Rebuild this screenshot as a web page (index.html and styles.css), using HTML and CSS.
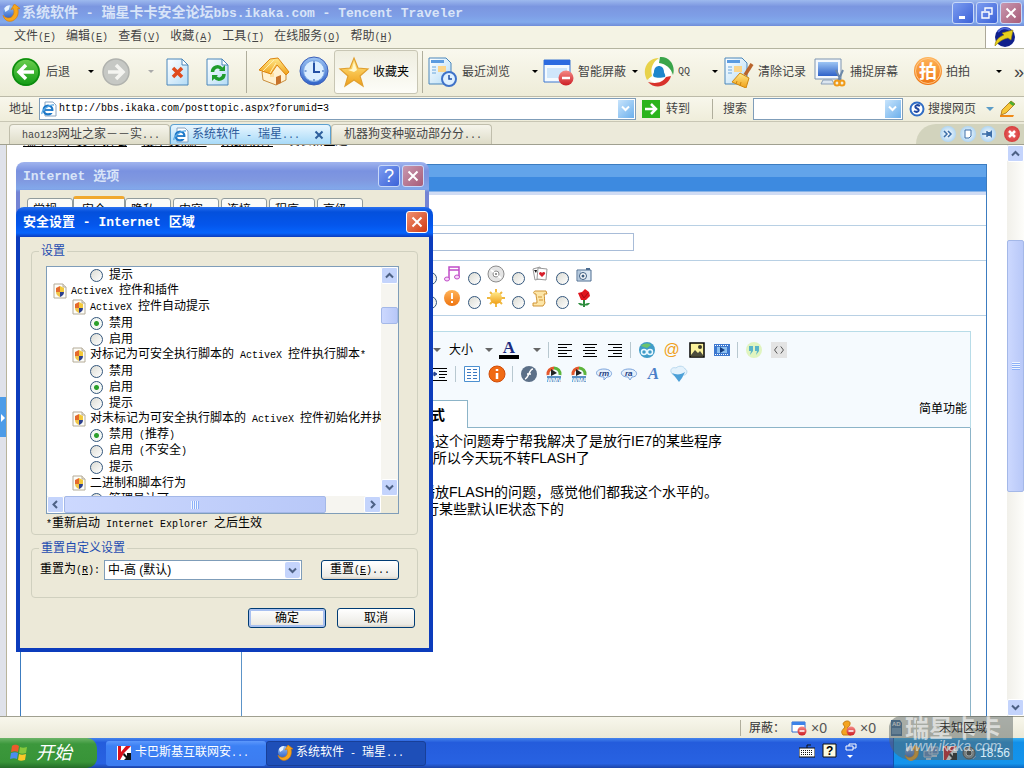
FILE: index.html
```html
<!DOCTYPE html>
<html lang="zh-CN">
<head>
  <meta charset="utf-8">
  <title>系统软件 - 瑞星卡卡安全论坛bbs.ikaka.com - Tencent Traveler</title>
  <link rel="stylesheet" href="styles.css">
</head>
<body>
  <!-- shared icons -->
  <svg class="defs" width="0" height="0">
    <defs>
      <linearGradient id="blueBall" x1="0" y1="0" x2="0" y2="1"><stop offset="0" stop-color="#9cc4f4"/><stop offset="1" stop-color="#2f62c8"/></linearGradient>
      <linearGradient id="greenBall" x1="0" y1="0" x2="0" y2="1"><stop offset="0" stop-color="#6fd050"/><stop offset="1" stop-color="#0f9a14"/></linearGradient>
      <linearGradient id="gold" x1="0" y1="0" x2="0" y2="1"><stop offset="0" stop-color="#ffe98a"/><stop offset="1" stop-color="#f0a018"/></linearGradient>
      <linearGradient id="paper" x1="0" y1="0" x2="1" y2="1"><stop offset="0" stop-color="#ffffff"/><stop offset="1" stop-color="#b4dcf6"/></linearGradient>
      <linearGradient id="redBall" x1="0" y1="0" x2="0" y2="1"><stop offset="0" stop-color="#f58a86"/><stop offset="1" stop-color="#cc1d24"/></linearGradient>
      <linearGradient id="orangeBall" x1="0" y1="0" x2="0" y2="1"><stop offset="0" stop-color="#ffb45a"/><stop offset="1" stop-color="#ee7410"/></linearGradient>
    </defs>
    <symbol id="tt" viewBox="0 0 16 16">
      <circle cx="7" cy="7" r="6" fill="url(#blueBall)"/>
      <path d="M2 4c1-2 3-3 5-3l-1 4-3 2z" fill="#e8f3ff"/>
      <path d="M1 10c2 3 6 3 8 1 2-2 2-5 1-7l-2 1 3-5 5 4-2 0c1 4 0 8-3 10-4 3-9 1-10-4z" fill="#f7a71c" stroke="#d97c08" stroke-width=".6"/>
    </symbol>
    <symbol id="ie" viewBox="0 0 16 16">
      <path d="M4 1h8l3 3v11H4z" fill="#fff" stroke="#8aa4c0"/>
      <circle cx="7" cy="9" r="4.4" fill="none" stroke="#1d78c8" stroke-width="2.2"/>
      <path d="M4 9h7" stroke="#1d78c8" stroke-width="1.8"/>
      <path d="M8 10h5v2H8z" fill="#fff"/>
      <path d="M1 13C0 10 8 3 13 4" fill="none" stroke="#59a8e4" stroke-width="1.3"/>
    </symbol>
    <symbol id="shield" viewBox="0 0 14 16">
      <path d="M1 1h9l3 3v11H1z" fill="#fdfdf8" stroke="#b4ab98"/>
      <path d="M10 1v3h3" fill="#e8e4d8" stroke="#b4ab98"/>
      <path d="M3 5l4-2v6H3z" fill="#e46a2c"/>
      <path d="M7 3l4 2v4H7z" fill="#f3c93a"/>
      <path d="M3 9h4v5c-2-1-4-2-4-5z" fill="#f0c64a"/>
      <path d="M7 9h4c0 3-2 4-4 5z" fill="#2c3f8c"/>
    </symbol>
    <symbol id="kav" viewBox="0 0 16 16">
      <path d="M1 1h14v14H1z" fill="#fff"/>
      <path d="M2 1h3v6l5-6h5L8 8l-4 7H2z" fill="#d8101c"/>
      <path d="M8 8l3 3V8h4v7H8l2-2-3-3z" fill="#111"/>
    </symbol>
    <symbol id="up" viewBox="0 0 9 9"><path d="M1 6.500l3.500-3.500L8 6.500" fill="none" stroke="#4d6185" stroke-width="2"/></symbol>
    <symbol id="down" viewBox="0 0 9 9"><path d="M1 2.500L4.500 6 8 2.500" fill="none" stroke="#4d6185" stroke-width="2"/></symbol>
    <symbol id="left" viewBox="0 0 9 9"><path d="M6 1L2.500 4.500 6 8" fill="none" stroke="#4d6185" stroke-width="2"/></symbol>
    <symbol id="right" viewBox="0 0 9 9"><path d="M3 1l3.500 3.500L3 8" fill="none" stroke="#4d6185" stroke-width="2"/></symbol>
    <symbol id="cross" viewBox="0 0 12 12"><path d="M1.500 1.500l9 9M10.500 1.500l-9 9" stroke="#fff" stroke-width="2"/></symbol>
    <symbol id="block" viewBox="0 0 16 16">
      <path d="M1 2h13v10H1z" fill="#fff" stroke="#2e6ad0"/>
      <path d="M1 2h13v3H1z" fill="#3c82e8"/>
      <circle cx="11" cy="11" r="4.500" fill="url(#redBall)"/>
      <path d="M8.500 11h5" stroke="#fff" stroke-width="1.500"/>
    </symbol>
  </svg>

  <header class="titlebar">
    <svg class="i18"><use href="#tt"/></svg>
    <h1>系统软件<span class="en"> - </span>瑞星卡卡安全论坛<span class="en">bbs.ikaka.com - Tencent Traveler</span></h1>
    <button class="winbtn" aria-label="最小化"><svg viewBox="0 0 12 12"><path d="M2 9h6v3H2z" fill="#fff"/></svg></button>
    <button class="winbtn" aria-label="还原"><svg viewBox="0 0 12 12"><path d="M4 4V1h7v6H8M1 5h7v6H1z" fill="none" stroke="#fff" stroke-width="1.400"/></svg></button>
    <button class="winbtn faded" aria-label="关闭"><svg><use href="#cross"/></svg></button>
  </header>

  <nav class="menubar">
    <a href="#">文件<span class="en">(<u>F</u>)</span></a>
    <a href="#">编辑<span class="en">(<u>E</u>)</span></a>
    <a href="#">查看<span class="en">(<u>V</u>)</span></a>
    <a href="#">收藏<span class="en">(<u>A</u>)</span></a>
    <a href="#">工具<span class="en">(<u>T</u>)</span></a>
    <a href="#">在线服务<span class="en">(<u>O</u>)</span></a>
    <a href="#">帮助<span class="en">(<u>H</u>)</span></a>
    <span class="brand">
      <svg class="i22" viewBox="0 0 22 22"><circle cx="11" cy="11" r="10" fill="#10208c"/><path d="M4 6c3-4 8-5 12-2" stroke="#4a62d8" stroke-width="2" fill="none"/><path d="M1 20c0-6 4-9 9-11l-2-2 11-3-2 10-3-2c-5 1-8 3-13 8z" fill="#e6cf1c" stroke="#8f7c08" stroke-width=".6"/></svg>
    </span>
  </nav>

  <div class="toolbar">
    <button class="tool">
      <svg viewBox="0 0 32 32"><circle cx="16" cy="16" r="14" fill="url(#greenBall)"/><circle cx="16" cy="16" r="13" fill="none" stroke="#0c8a10" stroke-width="1.500"/><path d="M24 16H10M16 9l-7 7 7 7" fill="none" stroke="#fff" stroke-width="3.500"/></svg>
      后退<i class="arrow end"></i>
    </button>
    <button class="tool">
      <svg viewBox="0 0 32 32"><circle cx="18" cy="16" r="13" fill="#c6c8c4" stroke="#b0b2ae" stroke-width="1.500"/><path d="M10 16h14M18 9l7 7-7 7" fill="none" stroke="#f4f4f0" stroke-width="3.500"/></svg>
      <i class="arrow off end"></i>
    </button>
    <button class="tool" aria-label="停止">
      <svg viewBox="0 0 32 32"><path d="M5 3h15l6 6v20H5z" fill="url(#paper)" stroke="#4a86ba"/><path d="M20 3v6h6z" fill="#fff" stroke="#4a86ba"/><path d="M11 12l9 9M20 12l-9 9" stroke="#e04a1c" stroke-width="3.500"/></svg>
    </button>
    <button class="tool" aria-label="刷新">
      <svg viewBox="0 0 32 32"><path d="M5 3h15l6 6v20H5z" fill="url(#paper)" stroke="#4a86ba"/><path d="M20 3v6h6z" fill="#fff" stroke="#4a86ba"/><path d="M10.500 16c0-5 6-7 9-3" fill="none" stroke="#1f9c2c" stroke-width="3.500"/><path d="M17 15h6V9z" fill="#1f9c2c"/><path d="M22 18c0 5-6 7-9 3" fill="none" stroke="#1f9c2c" stroke-width="3.500"/><path d="M16 19h-6v6z" fill="#1f9c2c"/></svg>
    </button>
    <i class="sep"></i>
    <button class="tool" aria-label="主页">
      <svg viewBox="0 0 32 32"><path d="M4 16l8-4 6-6 10 9v9l-10 5-13-5z" fill="#fff1d0" stroke="#c98d3c"/><path d="M18 29v-8l5-2v8z" fill="#c8732c"/><path d="M12 17h4v4h-4z" fill="#ffe0a0"/><path d="M1 14L12 3l8-1 11 14-3 3-9-10-6 9z" fill="url(#gold)" stroke="#dc8410"/><path d="M18 7l-6 10M16 4L5 15" stroke="#ffeeb0" fill="none"/></svg>
    </button>
    <button class="tool" aria-label="历史">
      <svg viewBox="0 0 32 32"><circle cx="16" cy="15" r="14" fill="url(#blueBall)" stroke="#3c5fb8"/><circle cx="16" cy="15" r="10.500" fill="#dbeeff" stroke="#7ca8e4"/><path d="M16 7v9h6" fill="none" stroke="#2450a4" stroke-width="2"/><path d="M16 5v2M16 23v2M6.500 15h2M24 15h2" stroke="#5c88cc" stroke-width="1.500"/></svg>
    </button>
    <button class="tool pressed">
      <svg viewBox="0 0 32 32"><path d="M16 2l4 10 10 1-8 7 3 10-9-6-9 6 3-10-8-7 10-1z" fill="url(#gold)" stroke="#e0a030" stroke-width="1.200"/><path d="M16 6l3 8-3 2-6-2 4-1z" fill="#fff8cc"/></svg>
      收藏夹
    </button>
    <i class="sep"></i>
    <button class="tool">
      <svg viewBox="0 0 32 32"><path d="M3 2h17l5 5v21H3z" fill="url(#paper)" stroke="#4a86ba"/><path d="M5 4h13v3H5z" fill="#5b9be0"/><path d="M12 10h8v6h-8z" fill="#fbd58a"/><path d="M6 11h4M6 14h4M6 17h4" stroke="#6ba6dc"/><circle cx="23" cy="23" r="7" fill="#dff0ff" stroke="#3f72c8" stroke-width="2"/><path d="M23 19v4h3" fill="none" stroke="#2450a4" stroke-width="1.500"/></svg>
      最近浏览<i class="arrow end"></i>
    </button>
    <button class="tool">
      <svg viewBox="0 0 32 32"><path d="M2 4h26v22H2z" fill="#f4faff" stroke="#3c76d0"/><path d="M2 4h26v5H2z" fill="#2d6be0"/><path d="M5 12h20v10H5z" fill="#cfe6fb"/><circle cx="24" cy="22" r="7.500" fill="url(#redBall)"/><path d="M20 22h8" stroke="#fff" stroke-width="2.500"/></svg>
      智能屏蔽<i class="arrow end"></i>
    </button>
    <button class="tool">
      <svg viewBox="0 0 32 32"><circle cx="17" cy="16" r="12" fill="#fff"/><path d="M5 24C-1 13 6 2 17 2c-6 4-9 10-7 18z" fill="#e8d24a"/><path d="M18 1c9-1 16 8 13 18-2-7-7-11-14-12z" fill="#3aa54a"/><path d="M29 20c-3 11-16 14-23 6 8 2 14 1 18-5z" fill="#d8322c"/><path d="M12 21c-2-2 0-4 0-5 0-8 10-8 10 0 0 1 2 3 1 5-3 1-9 1-11 0z" fill="#1e86cc"/></svg>
      <span class="en">QQ</span><i class="arrow end"></i>
    </button>
    <button class="tool">
      <svg viewBox="0 0 32 32"><path d="M3 2h17l5 5v21H3z" fill="url(#paper)" stroke="#4a86ba"/><path d="M5 4h13v3H5z" fill="#5b9be0"/><path d="M12 10h8v6h-8z" fill="#fbd58a"/><path d="M6 11h4M6 14h4M6 17h4" stroke="#6ba6dc"/><path d="M30 8l-7 11" stroke="#b8642c" stroke-width="3.500"/><path d="M18 17l9 5-3 10-14-6z" fill="url(#gold)" stroke="#d08810"/><path d="M15 25l-1 3M19 26l-1 4" stroke="#d08810"/></svg>
      清除记录
    </button>
    <button class="tool">
      <svg viewBox="0 0 32 32"><path d="M1 3h26v20H1z" fill="#f4f8fc" stroke="#7c94b0"/><path d="M4 6h20v14H4z" fill="url(#blueBall)"/><path d="M7 28h13l-2-4h-9z" fill="#dce6f0" stroke="#8ca0b8"/><path d="M22 14l5 11M29 14l-5 11" stroke="#6c88a8" stroke-width="2"/><circle cx="23" cy="27" r="2.500" fill="none" stroke="#f09a18" stroke-width="2"/><circle cx="28" cy="27" r="2.500" fill="none" stroke="#f09a18" stroke-width="2"/></svg>
      捕捉屏幕
    </button>
    <button class="tool">
      <svg viewBox="0 0 32 32"><circle cx="18" cy="15" r="14" fill="url(#orangeBall)"/><circle cx="18" cy="15" r="12.500" fill="none" stroke="#ffc888"/><text x="9" y="22" class="pai">拍</text></svg>
      拍拍<i class="arrow end"></i>
    </button>
    <button class="more" aria-label="更多">»</button>
  </div>

  <form class="addressbar">
    <label for="url">地址</label>
    <div class="field grow">
      <svg class="i16"><use href="#ie"/></svg>
      <input id="url" type="text" value="http://bbs.ikaka.com/posttopic.aspx?forumid=3">
      <button type="button" class="drop" aria-label="地址列表"><svg viewBox="0 0 9 9"><path d="M1 2.500L4.500 6 8 2.500" fill="none" stroke="#fff" stroke-width="2"/></svg></button>
    </div>
    <button type="button" class="go">
      <svg class="i18" viewBox="0 0 18 18"><path d="M0 0h18v18H0z" fill="#2cb41c"/><path d="M3 9h10M9 4l5 5-5 5" fill="none" stroke="#fff" stroke-width="2.500"/></svg>
      转到
    </button>
    <i class="sep"></i>
    <label for="search">搜索</label>
    <div class="field search">
      <input id="search" type="text">
      <button type="button" class="drop" aria-label="搜索列表"><svg viewBox="0 0 9 9"><path d="M1 2.500L4.500 6 8 2.500" fill="none" stroke="#fff" stroke-width="2"/></svg></button>
    </div>
    <button type="button" class="soso">
      <svg class="i16" viewBox="0 0 16 16"><circle cx="8" cy="8" r="6.500" fill="#fff" stroke="#2f6cc4" stroke-width="2"/><path d="M11 5C8 3 5 5 7 7l2 1c2 2-1 4-4 2" fill="none" stroke="#2048a0" stroke-width="2"/></svg>
      搜搜网页<i class="arrow blue"></i>
    </button>
    <svg class="i18" viewBox="0 0 18 18"><path d="M0 15h14l-1 2H0z" fill="#f08a18"/><path d="M1 15l1-5 9-9 4 3-9 9z" fill="#f7c83a" stroke="#b8842c"/><path d="M9 3l4 3 2-2-4-3z" fill="#4cae34"/></svg>
  </form>

  <div class="tabbar">
    <a class="tab" href="#"><span><span class="en">hao123</span>网址之家－－实<span class="en">...</span></span></a>
    <a class="tab active" href="#"><svg class="i16"><use href="#ie"/></svg><span>系统软件<span class="en"> - </span>瑞星<span class="en">...</span></span>
      <svg class="close" viewBox="0 0 10 10"><path d="M1.500 1.500l7 7M8.500 1.500l-7 7" stroke="#2e5f9c" stroke-width="2"/></svg></a>
    <a class="tab" href="#"><span>机器狗变种驱动部分分<span class="en">...</span></span></a>
    <div class="tabtools">
      <button aria-label="标签列表"><svg viewBox="0 0 16 16"><path d="M4 5l3 3-3 3M8 5l3 3-3 3" fill="none" stroke="#3c6ea8" stroke-width="1.500"/></svg></button>
      <button aria-label="新建标签"><svg viewBox="0 0 16 16"><path d="M5 4h6v6l-2 2H5z" fill="#fff" stroke="#3c6ea8"/></svg></button>
      <button aria-label="锁定标签"><svg viewBox="0 0 16 16"><path d="M2 8h5M7 5v6" fill="none" stroke="#3c6ea8" stroke-width="1.500"/><path d="M7 6h3l2-2v8l-2-2H7z" fill="#3c6ea8"/></svg></button>
      <button class="red" aria-label="关闭标签"><svg viewBox="0 0 16 16"><path d="M5 5l6 6M11 5l-6 6" stroke="#fff" stroke-width="2.500"/></svg></button>
    </div>
  </div>

  <main class="viewport">
    <button class="sidehandle" aria-label="展开侧栏"><svg viewBox="0 0 6 10"><path d="M1 1l4 4-4 4z" fill="#fff"/></svg></button>
    <div class="page">
      <div class="crumbs"><a href="#">瑞星卡卡安全论坛</a> » <a href="#">技术交流区</a> » <a href="#">系统软件</a> » <span>发表新主题</span></div>
      <div class="panel">
        <div class="panelhead"></div>
        <div class="formrow short"><div class="cap"></div><div class="cell"></div></div>
        <div class="formrow"><div class="cap"></div><div class="cell"><input class="subject" type="text" aria-label="标题"></div></div>
        <div class="formrow icons">
          <div class="cap"></div>
          <div class="cell moods">
            <label><input type="radio" name="mood"><svg viewBox="0 0 18 18"><path d="M6 14V2h10v10M6 5h10" fill="none" stroke="#c04cc8" stroke-width="1.500"/><ellipse cx="4" cy="14" rx="2.500" ry="2" fill="#f6d8f8" stroke="#c04cc8"/><ellipse cx="14" cy="12" rx="2.500" ry="2" fill="#f6d8f8" stroke="#c04cc8"/></svg></label>
            <label><input type="radio" name="mood"><svg viewBox="0 0 18 18"><circle cx="9" cy="9" r="8" fill="#e4e4e4" stroke="#8c8c8c"/><circle cx="9" cy="9" r="3" fill="#fff" stroke="#8c8c8c"/><circle cx="9" cy="9" r="1" fill="#777"/><path d="M4 5l3 2M11 11l3 2" stroke="#fff" stroke-width="2"/></svg></label>
            <label><input type="radio" name="mood"><svg viewBox="0 0 18 18"><path d="M2 4l7-2 3 11-8 2z" fill="#fff" stroke="#999"/><path d="M7 3l9 1-1 11-9-1z" fill="#fff" stroke="#999"/><path d="M3 5h3l-1 3z" fill="#111"/><path d="M11 12L8 9c0-2 2-3 3-1 1-2 4-1 3 1z" fill="#d8202c"/></svg></label>
            <label><input type="radio" name="mood"><svg viewBox="0 0 18 18"><path d="M2 5h14v11H2z" fill="#dce8f4" stroke="#4c6c90"/><path d="M11 3h4v2h-4z" fill="#4c6c90"/><path d="M3 6h3v9H3z" fill="#b4c8dc"/><circle cx="8" cy="11" r="3.500" fill="#fff" stroke="#3c5c80"/><circle cx="8" cy="11" r="1.500" fill="#3c5c80"/></svg></label>
            <label><input type="radio" name="mood"><svg viewBox="0 0 18 18"><circle cx="9" cy="9" r="8" fill="url(#orangeBall)"/><path d="M9 4v6M9 12v2" stroke="#fff" stroke-width="2"/></svg></label>
            <label><input type="radio" name="mood"><svg viewBox="0 0 18 18"><path d="M9 0v18M0 9h18M3 3l12 12M15 3L3 15" stroke="#f0b840" stroke-width="2"/><circle cx="9" cy="9" r="6" fill="url(#gold)"/></svg></label>
            <label><input type="radio" name="mood"><svg viewBox="0 0 18 18"><path d="M4 2h11l1 3h-3c1 4 0 6 1 9l-2 3H2v-3h4c0-4-1-6-1-9-3 0-3-2-1-3z" fill="#fde6a8" stroke="#d09434"/><path d="M7 8h4M8 11h4" stroke="#d09434"/></svg></label>
            <label><input type="radio" name="mood"><svg viewBox="0 0 18 18"><path d="M9 9v9" stroke="#2c8c3c" stroke-width="2"/><path d="M9 16c-2-2-4-2-6-2 2 3 4 3 6 2 2-2 4-2 6-2-2 3-4 3-6 2" fill="#2c8c3c"/><path d="M3 4l4-1 3-3 4 3 1 4-4 4H6z" fill="#e0141c"/><path d="M6 4l3 5 4-5" fill="none" stroke="#a80810"/></svg></label>
          </div>
        </div>
        <div class="formrow editorrow">
          <div class="cap"></div>
          <div class="cell">
            <div class="editor">
              <div class="edtools">
                <div class="edline">
                  <button class="mini" aria-label="字体"><i class="arrow grey"></i></button>
                  <button class="size">大小<i class="arrow grey"></i></button>
                  <button class="color" aria-label="颜色"><span>A</span><i class="arrow grey"></i></button>
                  <i class="sep"></i>
                  <button aria-label="左对齐"><svg viewBox="0 0 18 18"><path d="M2 3.500h14M2 6.500h9M2 9.500h14M2 12.500h9M2 15.500h14" stroke="#000"/></svg></button>
                  <button aria-label="居中"><svg viewBox="0 0 18 18"><path d="M2 3.500h14M4 6.500h10M2 9.500h14M4 12.500h10M2 15.500h14" stroke="#000"/></svg></button>
                  <button aria-label="右对齐"><svg viewBox="0 0 18 18"><path d="M2 3.500h14M7 6.500h9M2 9.500h14M7 12.500h9M2 15.500h14" stroke="#000"/></svg></button>
                  <i class="sep"></i>
                  <button aria-label="链接"><svg viewBox="0 0 18 18"><circle cx="9" cy="9" r="8" fill="#3f9cc8"/><path d="M3 5c3-3 7-3 10-1l-4 3z" fill="#6cc46c"/><circle cx="6" cy="11" r="2.500" fill="none" stroke="#e8f8ff" stroke-width="1.500"/><circle cx="12" cy="11" r="2.500" fill="none" stroke="#e8f8ff" stroke-width="1.500"/></svg></button>
                  <button class="at" aria-label="邮件">@</button>
                  <button aria-label="图片"><svg viewBox="0 0 18 18"><path d="M2 2h14v14H2z" fill="#fbf29c" stroke="#000" stroke-width="1.500"/><path d="M3 14l4-5 3 3 2-2 3 4v1H3z" fill="#4c4c3c"/><circle cx="12" cy="6" r="2" fill="#3c3c2c"/></svg></button>
                  <button aria-label="视频"><svg viewBox="0 0 18 18"><path d="M1 3h16v12H1z" fill="#3c78d0"/><path d="M2 4.500h14M2 13.500h14" stroke="#fff" stroke-dasharray="1 1"/><path d="M4 6h10v6H4z" fill="#8cc0f0"/><path d="M7 6l5 3-5 3z" fill="#123c80"/></svg></button>
                  <i class="sep"></i>
                  <button aria-label="引用"><svg viewBox="0 0 18 18"><circle cx="9" cy="9" r="8" fill="#e0f4c0"/><path d="M4 5h4v5l-3 4 1-4H4zM10 5h4v5l-3 4 1-4h-2z" fill="#5ab4c8"/></svg></button>
                  <button class="code" aria-label="代码"><svg viewBox="0 0 18 18"><path d="M7 5L4 9l3 4M11 5l3 4-3 4" fill="none" stroke="#444"/></svg></button>
                </div>
                <div class="edline">
                  <button aria-label="缩进"><svg viewBox="0 0 18 18"><path d="M2 3.500h14M8 6.500h8M8 9.500h8M8 12.500h6M2 15.500h14" stroke="#000"/><path d="M1 9h3M3 7l3 2-3 2z" fill="#23408c" stroke="#23408c"/></svg></button>
                  <i class="sep"></i>
                  <button aria-label="表格"><svg viewBox="0 0 18 18"><path d="M1.500 1.500h15v15h-15z" fill="#fff" stroke="#4c90d0"/><path d="M4 4.500h4M10 4.500h4M4 7.500h4M10 7.500h4M4 10.500h4M10 10.500h4M4 13.500h4M10 13.500h4" stroke="#3c78c0"/></svg></button>
                  <button aria-label="信息"><svg viewBox="0 0 18 18"><circle cx="9" cy="9" r="8" fill="#f06a14" stroke="#d04c08"/><path d="M9 4v2M9 8v6" stroke="#fff" stroke-width="2.500"/></svg></button>
                  <i class="sep"></i>
                  <button aria-label="Flash"><svg viewBox="0 0 18 18"><circle cx="9" cy="9" r="8" fill="#5c7088"/><path d="M13 4C9 4 9 13 5 14M7 9h4" fill="none" stroke="#fff" stroke-width="1.500"/></svg></button>
                  <button aria-label="WMV"><svg viewBox="0 0 18 18"><path d="M3 10a6 6 0 0 1 6-7" fill="none" stroke="#e4582c" stroke-width="3"/><path d="M9 3a6 6 0 0 1 6 7" fill="none" stroke="#5cb43c" stroke-width="3"/><path d="M6 4l6 4-6 3z" fill="#222"/><path d="M2 11h14v6H2z" fill="#5c90c4"/><text x="2" y="17" class="fmt">WMV</text></svg></button>
                  <button aria-label="WMA"><svg viewBox="0 0 18 18"><path d="M3 10a6 6 0 0 1 6-7" fill="none" stroke="#e4582c" stroke-width="3"/><path d="M9 3a6 6 0 0 1 6 7" fill="none" stroke="#5cb43c" stroke-width="3"/><path d="M6 4l6 4-6 3z" fill="#222"/><path d="M2 11h14v6H2z" fill="#5c90c4"/><text x="2" y="17" class="fmt">WMA</text></svg></button>
                  <button aria-label="rm"><svg viewBox="0 0 18 18"><path d="M9 4c9 0 10 8 3 8l-3 3v-3C-1 12-1 4 9 4z" fill="#e4f0fc" stroke="#7ca4dc"/><text x="4" y="11" class="real">rm</text></svg></button>
                  <button aria-label="ra"><svg viewBox="0 0 18 18"><path d="M9 4c9 0 10 8 3 8l-2 3-2-3C-1 12-1 4 9 4z" fill="#e4f0fc" stroke="#7ca4dc"/><text x="5" y="11" class="real">ra</text></svg></button>
                  <button class="styled" aria-label="文字样式">A</button>
                  <button aria-label="下载"><svg viewBox="0 0 18 18"><path d="M1 7c-1-4 3-5 5-4 3-3 8-2 9 1 3 1 2 5 0 6H3z" fill="#e4f2fc" stroke="#b8d8ee"/><path d="M2 8c4 2 9 2 13-1l-3 6-3 4-3-4z" fill="#4ca0d8"/></svg></button>
                </div>
                <div class="modes"><button class="mode">模式</button><a href="#">简单功能</a></div>
              </div>
              <textarea class="message" aria-label="内容">出这个问题寿宁帮我解决了是放行IE7的某些程序
   所以今天玩不转FLASH了

播放FLASH的问题，感觉他们都我这个水平的。
 行某些默认IE状态下的</textarea>
            </div>
          </div>
        </div>
      </div>
    </div>
    <div class="vscroll wide">
      <button aria-label="向上"><svg><use href="#up"/></svg></button>
      <span class="before"></span><span class="thumb grip"></span><span class="after"></span>
      <button aria-label="向下"><svg><use href="#down"/></svg></button>
    </div>
  </main>

  <footer class="statusbar">
    <span class="panels">
      <span>屏蔽：</span>
      <svg class="i16"><use href="#block"/></svg><span class="count">×0</span>
      <svg class="i16" viewBox="0 0 16 16"><path d="M3 4c1-4 8-4 7 0 0 2-2 3-3 4l7 3-3 4H3c-3-4 0-5 2-8z" fill="#f4a420" stroke="#c87c10"/><circle cx="11" cy="11" r="4.500" fill="url(#redBall)"/><path d="M8.500 11h5" stroke="#fff" stroke-width="1.500"/></svg><span class="count">×0</span>
      <svg class="i16" viewBox="0 0 16 16"><path d="M2 0h9l2 3v13H2z" fill="#3c6c9c"/><path d="M3 8h9v6H3z" fill="#6c98c0"/><text x="3" y="6" class="fmt">AD</text></svg>
    </span>
    <span class="zone">未知区域</span>
  </footer>

  <div class="taskbar">
    <button class="start">
      <svg viewBox="0 0 20 20"><path d="M3 3c3-2 5-1 7 0L9 9C7 8 5 8 2 9z" fill="#ec5a2c"/><path d="M11 4c2 1 4 1 7 0l-1 6c-3 1-5 1-7 0z" fill="#86c83c"/><path d="M2 10c3-1 5-1 7 0l-1 6c-2-1-4-1-7 0z" fill="#4c8cf0"/><path d="M10 11c2 1 4 1 7 0l-1 6c-3 1-5 1-7 0z" fill="#fac828"/></svg>
      开始
    </button>
    <button class="task"><svg class="i16"><use href="#kav"/></svg><span>卡巴斯基互联网安<span class="en">...</span></span></button>
    <button class="task current"><svg class="i16"><use href="#tt"/></svg><span>系统软件<span class="en"> - </span>瑞星<span class="en">...</span></span></button>
    <div class="lang">
      <svg class="i16" viewBox="0 0 16 16"><path d="M8 5V2h4" fill="none" stroke="#111"/><path d="M0 5h16v9H0z" fill="#fff" stroke="#111"/><path d="M2 7.500h12M2 9.500h12M2 11.500h12" stroke="#111" stroke-dasharray="1 1"/></svg>
      <svg class="i16" viewBox="0 0 16 16"><path d="M2 1h13v13H2z" fill="#fffce0" stroke="#111"/><text x="5" y="12" class="help">?</text></svg>
      <svg class="i16 up" viewBox="0 0 16 16"><path d="M6 3V1h7v4h-3M3 3h7v4H3z" fill="none" stroke="#fff"/><path d="M4 12h6l-3 3z" fill="#fff"/></svg>
    </div>
    <div class="tray">
      <svg class="i16"><use href="#tt"/></svg>
      <svg class="i16" viewBox="0 0 16 16"><path d="M1 6h8v6H1zM6 2h9v7H6z" fill="#5c8ccc" stroke="#c4dcf4"/><path d="M3 14h5M9 11h5" stroke="#c4dcf4" stroke-width="2"/></svg>
      <svg class="i16"><use href="#kav"/></svg>
      <svg class="i16" viewBox="0 0 16 16"><circle cx="8" cy="8" r="6" fill="#8c9498" stroke="#444"/><circle cx="8" cy="8" r="3" fill="#333" stroke="#ddd"/><path d="M12 14l3-3" stroke="#aac"/></svg>
      <span class="clock">18:56</span>
    </div>
  </div>

  <div class="watermark"><b>瑞星卡卡</b><span>www.ikaka.com</span></div>

  <section class="dialog options">
    <div class="dlgtitle"><h2><span class="en">Internet </span>选项</h2>
      <button class="winbtn" aria-label="帮助">?</button>
      <button class="winbtn faded" aria-label="关闭"><svg><use href="#cross"/></svg></button></div>
    <div class="dlgbody">
      <div class="dlgtabs">
        <button>常规</button><button class="on">安全</button><button>隐私</button><button>内容</button><button>连接</button><button>程序</button><button>高级</button>
      </div>
    </div>
  </section>

  <section class="dialog security">
    <div class="dlgtitle"><h2>安全设置<span class="en"> - Internet </span>区域</h2>
      <button class="winbtn close" aria-label="关闭"><svg><use href="#cross"/></svg></button></div>
    <div class="dlgbody">
      <fieldset>
        <legend>设置</legend>
        <div class="listbox">
          <div class="tree">
            <label class="opt"><input type="radio" name="g0"><span>提示</span></label>
            <div class="group top"><svg><use href="#shield"/></svg><span><span class="en">ActiveX </span>控件和插件</span></div>
            <div class="group"><svg><use href="#shield"/></svg><span><span class="en">ActiveX </span>控件自动提示</span></div>
            <label class="opt"><input type="radio" name="g1" checked><span>禁用</span></label>
            <label class="opt"><input type="radio" name="g1"><span>启用</span></label>
            <div class="group"><svg><use href="#shield"/></svg><span>对标记为可安全执行脚本的<span class="en"> ActiveX </span>控件执行脚本<span class="en">*</span></span></div>
            <label class="opt"><input type="radio" name="g2"><span>禁用</span></label>
            <label class="opt"><input type="radio" name="g2" checked><span>启用</span></label>
            <label class="opt"><input type="radio" name="g2"><span>提示</span></label>
            <div class="group"><svg><use href="#shield"/></svg><span>对未标记为可安全执行脚本的<span class="en"> ActiveX </span>控件初始化并执行脚本</span></div>
            <label class="opt"><input type="radio" name="g3" checked><span>禁用<span class="en"> (</span>推荐<span class="en">)</span></span></label>
            <label class="opt"><input type="radio" name="g3"><span>启用<span class="en"> (</span>不安全<span class="en">)</span></span></label>
            <label class="opt"><input type="radio" name="g3"><span>提示</span></label>
            <div class="group"><svg><use href="#shield"/></svg><span>二进制和脚本行为</span></div>
            <label class="opt"><input type="radio" name="g4"><span>管理员认可</span></label>
          </div>
          <div class="vscroll">
            <button aria-label="向上"><svg><use href="#up"/></svg></button>
            <span class="before"></span><span class="thumb"></span><span class="after"></span>
            <button aria-label="向下"><svg><use href="#down"/></svg></button>
          </div>
          <div class="hscroll">
            <button aria-label="向左"><svg><use href="#left"/></svg></button>
            <span class="thumb grip"></span><span class="after"></span>
            <button aria-label="向右"><svg><use href="#right"/></svg></button>
          </div>
        </div>
        <p class="note"><span class="en">*</span>重新启动<span class="en"> Internet Explorer </span>之后生效</p>
      </fieldset>
      <fieldset class="reset">
        <legend>重置自定义设置</legend>
        <div class="resetrow">
          <label for="level">重置为<span class="en">(<u>R</u>):</span></label>
          <div class="combo">
            <select id="level"><option>中-高 (默认)</option></select>
            <span class="combobtn"><svg><use href="#down"/></svg></span>
          </div>
          <button class="xpbtn">重置<span class="en">(<u>E</u>)...</span></button>
        </div>
      </fieldset>
      <div class="dlgbtns">
        <button class="xpbtn default">确定</button>
        <button class="xpbtn">取消</button>
      </div>
    </div>
  </section>
</body>
</html>
```

FILE: styles.css
```css
* {
  box-sizing: border-box;
}

body {
  margin: 0;
  height: 100vh;
  display: flex;
  flex-direction: column;
  overflow: hidden;
  position: relative;
  background: #fff;
  color: #000;
  font: 12px/16px "Liberation Sans", "Noto Sans CJK SC", sans-serif;
}

button, input, select, textarea {
  font: inherit;
  color: inherit;
}

button {
  padding: 0;
  border: 0;
  background: none;
  white-space: nowrap;
}

a {
  color: inherit;
  text-decoration: none;
}

h1, h2, p {
  margin: 0;
}

svg {
  flex: none;
}

.defs {
  position: absolute;
}

/* half-width latin beside the 12px chinese text */
.en {
  font-family: "Liberation Mono", monospace;
  font-size: 10px;
  white-space: pre;
}

.i16 { width: 16px; height: 16px; }
.i18 { width: 18px; height: 18px; }
.i22 { width: 22px; height: 22px; }

.arrow {
  border: 3px solid transparent;
  border-top-color: #000;
  border-bottom: 0;
  flex: none;
}

.arrow.off { border-top-color: #aaa; }
.arrow.grey { border-width: 4px 4px 0; border-top-color: #666; }
.arrow.blue { border-width: 4px 4px 0; border-top-color: #5c9cc8; }
.arrow.end { margin-left: auto; }

/* title bar */
.titlebar {
  flex: none;
  height: 26px;
  display: flex;
  align-items: center;
  gap: 2px;
  padding: 0 2px;
  background: linear-gradient(#9db9ee, #7b96e0 25%, #7e9ee6 60%, #82aaec 85%, #6f8cd8);
}

.titlebar h1 {
  flex: 1;
  font-size: 14px;
  color: #d8e4f8;
}

.titlebar .en, .dlgtitle .en {
  font-size: 13px;
}

.winbtn {
  width: 22px;
  height: 22px;
  display: flex;
  align-items: center;
  justify-content: center;
  border: 1px solid #c8d8f8;
  border-radius: 3px;
  background: linear-gradient(135deg, #7c9cf0, #3c62d8);
  color: #fff;
  font-size: 18px;
}

.winbtn svg {
  width: 12px;
  height: 12px;
}

.winbtn.faded { background: linear-gradient(135deg, #c898b0, #a85c78); }
.winbtn.close { background: linear-gradient(135deg, #f09070, #d03c14); border-color: #fff; }

/* menu */
.menubar {
  flex: none;
  height: 23px;
  display: flex;
  align-items: center;
  gap: 10px;
  padding-left: 14px;
  background: #f4f3e4;
  border-bottom: 1px solid #b4b4a0;
  color: #444;
}

.brand {
  margin-left: auto;
  width: 39px;
  height: 22px;
  display: flex;
  justify-content: center;
  background: #fff;
  border-left: 1px solid #aca899;
}

/* toolbar */
.toolbar {
  flex: none;
  height: 48px;
  display: grid;
  grid-template-columns: 88px 60px 40px 40px 16px 40px 40px 84px 8px 116px 100px 80px 92px 96px 96px 1fr;
  align-items: center;
  padding: 0 0 2px 10px;
  background: linear-gradient(#f9f8ee, #eeecd8);
  border-bottom: 1px solid #bcbaa8;
  color: #444;
}

.tool {
  height: 44px;
  display: flex;
  align-items: center;
  gap: 4px;
  padding: 0 4px 0 0;
}

.tool svg {
  width: 32px;
  height: 32px;
}

.tool[aria-label] {
  justify-content: center;
  padding: 0;
}

.tool.pressed {
  border: 1px solid #c8c6b4;
  border-radius: 3px;
  background: linear-gradient(#efeee0, #fdfdf8);
  color: #000;
  padding-left: 3px;
  gap: 3px;
}

.pai {
  font: bold 18px "Noto Sans CJK SC", sans-serif;
  fill: #fff;
}

.sep {
  width: 1px;
  height: 42px;
  background: #b0ae9c;
  justify-self: center;
}

.more {
  font-size: 18px;
  text-align: right;
}

/* address bar */
.addressbar {
  flex: none;
  height: 25px;
  display: flex;
  align-items: center;
  gap: 6px;
  padding: 0 6px 0 9px;
  background: linear-gradient(#f8f7ec, #efedda);
  border-bottom: 1px solid #c8c6b4;
  color: #444;
}

.addressbar .sep {
  height: 20px;
  margin: 0 4px 0 16px;
}

.field {
  height: 22px;
  display: flex;
  align-items: center;
  padding: 1px;
  background: #fff;
  border: 1px solid #7f9db9;
}

.field.grow { flex: 1; }
.field.search { width: 150px; }

.field input {
  flex: 1;
  min-width: 0;
  padding: 0 2px;
  border: 0;
  outline: 0;
  color: #000;
  font-family: "Liberation Mono", monospace;
  font-size: 10px;
}

.drop {
  width: 16px;
  height: 18px;
  background: linear-gradient(135deg, #c8e4fc, #6cb0ec);
}

.drop svg {
  width: 9px;
  height: 9px;
}

.go, .soso {
  display: flex;
  align-items: center;
  gap: 6px;
}

.soso {
  gap: 3px;
}

.soso .arrow {
  margin-left: 7px;
}

/* page tabs */
.tabbar {
  flex: none;
  height: 23px;
  display: flex;
  align-items: flex-end;
  padding-left: 9px;
  background: #eceada;
  border-bottom: 1px solid #a0a090;
}

.tab {
  width: 161px;
  height: 20px;
  display: flex;
  align-items: center;
  padding: 0 12px;
  border: 1px solid #c0beac;
  border-bottom: 0;
  border-radius: 4px 4px 0 0;
  background: linear-gradient(#f6f5ec, #dedcc8);
  color: #444;
  white-space: nowrap;
}

.tab.active {
  padding: 0 6px 0 2px;
  background: linear-gradient(#e8f6ff, #a8daf8);
  border-color: #5ca0d0;
  color: #2c5c9c;
}

.tab .i16 {
  margin-right: 3px;
}

.tab .close {
  width: 10px;
  height: 10px;
  margin-left: auto;
}

.tabtools {
  height: 20px;
  margin-left: auto;
  display: flex;
  align-items: center;
  gap: 4px;
  padding: 0 4px 0 24px;
  background: #d2d3bd;
  border-radius: 24px 0 0 0;
}

.tabtools button {
  width: 16px;
  height: 16px;
  border-radius: 8px;
  background: radial-gradient(#fff, #90c4ec);
}

.tabtools svg {
  display: block;
}

.tabtools .red {
  margin-left: 4px;
  background: radial-gradient(#f07070, #cc2828);
}

/* page area */
.viewport {
  flex: 1;
  min-height: 0;
  display: flex;
  background: #fff;
}

.sidehandle {
  width: 7px;
  display: flex;
  align-items: center;
  background: linear-gradient(#dfe2ea 252px, #4c9ce8 252px 292px, #dfe2ea 292px);
  border-right: 1px solid #b8b49c;
}

.sidehandle svg {
  width: 6px;
  height: 10px;
  margin-bottom: 26px;
}

.page {
  flex: 1;
  min-width: 0;
  display: flex;
  flex-direction: column;
  padding: 0 20px 0 13px;
  overflow: hidden;
}

.crumbs {
  flex: none;
  margin-top: -12px;
  height: 31px;
  padding-left: 3px;
  font-size: 13px;
}

.crumbs a {
  text-decoration: underline;
}

.crumbs span {
  font-size: 12px;
}

.panel {
  flex: 1;
  display: flex;
  flex-direction: column;
  border: solid #3c7cc0;
  border-width: 1px 1px 0;
}

.panelhead {
  flex: none;
  height: 30px;
  background: linear-gradient(#62a4ea 12px, #3d8ae0 12px 26px, #88b4e8 26px 27px, #d0dcf4 27px);
}

.formrow {
  flex: none;
  height: 35px;
  display: flex;
  border-bottom: 1px solid #b8d0e4;
}

.formrow.short { height: 31px; }
.formrow.icons { height: 55px; }

.formrow.editorrow {
  flex: 1;
  border-bottom: 0;
}

.cap {
  width: 221px;
  border-right: 1px solid #5c94c8;
}

.cell {
  flex: 1;
  min-width: 0;
  padding: 7px 15px 0 8px;
}

.subject {
  width: 384px;
  height: 18px;
  display: block;
  border: 1px solid #a8bcd8;
}

.moods {
  display: grid;
  grid-template-columns: repeat(4, 44px);
  align-content: start;
  row-gap: 4px;
  padding: 4px 0 0 182px;
}

.moods label {
  display: flex;
  align-items: flex-end;
  gap: 6px;
  height: 20px;
}

.moods svg {
  width: 18px;
  height: 18px;
  margin-bottom: 2px;
}

input[type="radio"] {
  appearance: none;
  width: 13px;
  height: 13px;
  margin: 0;
  flex: none;
  border: 1px solid #33567c;
  border-radius: 7px;
  background: linear-gradient(135deg, #dcdcd4, #fff);
}

input[type="radio"]:checked {
  background: radial-gradient(#2ca02c 2px, #f4f8f4 3px);
}

/* editor */
.cell > .editor {
  height: 100%;
  margin-top: 8px;
  display: flex;
  flex-direction: column;
}

.edtools {
  flex: none;
  padding: 6px 0 0 177px;
  background: #f5fafe;
  border: solid #b8dce8;
  border-width: 1px 1px 0 0;
}

.edline {
  display: flex;
  align-items: center;
  height: 24px;
}

.edline button {
  width: 25px;
  height: 20px;
  display: flex;
  align-items: center;
  justify-content: center;
}

.edline svg {
  width: 18px;
  height: 18px;
}

.edline .sep {
  height: 16px;
  margin: 0 3px;
  background: #b8c8d0;
}

.edline .mini {
  width: 20px;
}

.edline .size {
  width: 48px;
  gap: 12px;
}

.edline .color {
  width: 50px;
  justify-content: flex-start;
  gap: 14px;
  padding-left: 4px;
}

.color span {
  width: 20px;
  height: 18px;
  border-bottom: 4px solid #000;
  color: #1c2c80;
  font: bold 17px/14px "Liberation Serif", serif;
}

.edline .at {
  color: #f0a020;
  font-size: 16px;
}

.edline .styled {
  color: #4c80c8;
  font: italic bold 17px "Liberation Serif", serif;
}

.edline .code svg {
  width: 16px;
  height: 16px;
  background: #e4e4e4;
}

.fmt {
  font: bold 6px "Liberation Sans", sans-serif;
  fill: #fff;
}

.real {
  font: italic bold 8px "Liberation Sans", sans-serif;
  fill: #1c3c80;
}

.modes {
  display: flex;
  justify-content: space-between;
  align-items: flex-end;
  height: 42px;
  padding-right: 3px;
  border-bottom: 1px solid #8cb4c8;
}

.modes a {
  padding-bottom: 10px;
}

.mode {
  width: 41px;
  height: 28px;
  margin-bottom: -1px;
  padding-right: 22px;
  direction: rtl;
  background: #fff;
  border: 1px solid #8cb4c8;
  border-bottom: 0;
  font-size: 14px;
  font-weight: bold;
}

.message {
  flex: 1;
  padding: 5px 0 0 171px;
  border: solid #8cb4c8;
  border-width: 0 1px 0 0;
  outline: 0;
  resize: none;
  font-size: 14px;
  line-height: 17px;
}

/* scroll bars */
.vscroll, .hscroll {
  display: flex;
  background: #f6f5f0;
}

.vscroll {
  width: 17px;
  flex-direction: column;
}

.vscroll.wide {
  background: linear-gradient(to right, #f1f0ea, #fdfdfa);
}

.vscroll button, .hscroll button {
  width: 17px;
  height: 17px;
  display: flex;
  align-items: center;
  justify-content: center;
  border: 1px solid #fff;
  border-radius: 2px;
  background: #c4d4fc;
}

.vscroll svg, .hscroll svg, .combo svg {
  width: 9px;
  height: 9px;
}

.thumb {
  display: flex;
  align-items: center;
  justify-content: center;
  border: 1px solid #a4b8e8;
  border-radius: 2px;
  background: linear-gradient(to right, #ccd8fe, #b8c8f8);
}

.vscroll .before { flex: 50; }
.vscroll .thumb { flex: 34; }
.vscroll .after { flex: 342; }
.vscroll.wide .before { flex: 78; }
.vscroll.wide .thumb { flex: 252; }
.vscroll.wide .after { flex: 208; }
.hscroll .thumb { flex: 262; }
.hscroll .after { flex: 38; }

.grip::before {
  content: "";
  width: 8px;
  height: 8px;
  background: repeating-linear-gradient(#eef4fe 0 1px, #8cb0f8 1px 2px);
}

.hscroll .grip::before {
  background: repeating-linear-gradient(to right, #eef4fe 0 1px, #8cb0f8 1px 2px);
}

/* status bar */
.statusbar {
  flex: none;
  height: 22px;
  display: flex;
  justify-content: flex-end;
  align-items: center;
  background: linear-gradient(#f8f7ec, #ebe9d8);
  border-top: 1px solid #a0a090;
  color: #333;
}

.panels, .zone {
  display: flex;
  align-items: center;
  border-left: 1px solid #b0ae9c;
}

.panels {
  width: 176px;
  gap: 4px;
  padding-left: 8px;
  white-space: nowrap;
}

.panels > span:first-child {
  width: 38px;
}

.count {
  width: 25px;
  font-size: 14px;
  color: #555;
}

.zone {
  width: 108px;
  padding-left: 22px;
  position: relative;
  z-index: 2;
}

/* taskbar */
.taskbar {
  flex: none;
  height: 30px;
  display: flex;
  align-items: center;
  background: linear-gradient(#4484ec, #245cdc 15%, #2862e2 85%, #1c44a8);
  color: #fff;
}

.start {
  width: 97px;
  height: 30px;
  display: flex;
  align-items: center;
  gap: 7px;
  padding-left: 9px;
  margin-right: 9px;
  border-radius: 0 10px 10px 0;
  background: linear-gradient(#6cb468, #3c983c 20%, #389438 80%, #246c28);
  font-size: 18px;
  font-style: italic;
}

.start svg {
  width: 20px;
  height: 20px;
}

.task {
  width: 160px;
  height: 25px;
  display: flex;
  align-items: center;
  gap: 3px;
  padding-left: 10px;
  border-radius: 3px;
  background: linear-gradient(#5c98fc, #3c80f4 20%, #3c7cf0);
}

.task.current {
  background: #1e4fb8;
  border: 1px solid #183f98;
}

.lang {
  display: flex;
  gap: 6px;
  margin-left: auto;
  padding-right: 34px;
}

.lang .up {
  margin-bottom: 4px;
}

.help {
  font: bold 12px "Liberation Sans", sans-serif;
}

.tray {
  width: 131px;
  height: 30px;
  display: flex;
  align-items: center;
  gap: 3px;
  padding-left: 10px;
  background: linear-gradient(#38b0f4, #1290e8 15%, #1494ec 85%, #0c68c0);
  border-left: 1px solid #1050b0;
}

.clock {
  position: relative;
  z-index: 2;
  color: #d8ecf8;
}

.watermark {
  position: absolute;
  right: 11px;
  bottom: 8px;
  width: 124px;
  height: 44px;
  padding: 3px 0 0 16px;
  border-radius: 12px 0 0 22px;
  background: rgba(90, 100, 100, 0.5);
  color: rgba(255, 255, 255, 0.6);
}

.watermark b {
  display: block;
  font-size: 24px;
  line-height: 20px;
}

.watermark span {
  display: block;
  font-size: 14px;
  line-height: 14px;
  font-style: italic;
}

/* dialogs */
.dialog {
  position: absolute;
  left: 16px;
  display: flex;
  flex-direction: column;
  padding: 0 4px 4px;
  border-radius: 8px 8px 0 0;
}

.options {
  top: 162px;
  width: 413px;
  height: 300px;
  background: linear-gradient(#a0b4ee, #7a92e0 3%, #8098e0 6%, #82a8ea 9%, #7484d4 10%);
}

.security {
  top: 207px;
  width: 417px;
  background: linear-gradient(#2870f0, #0450dc 5px, #0456ec 18px, #0664fc 26px, #0c3cbc 30px);
}

.dlgtitle {
  height: 28px;
  display: flex;
  align-items: center;
  gap: 2px;
  padding: 0 1px 0 3px;
}

.security .dlgtitle {
  height: 30px;
}

.dlgtitle h2 {
  flex: 1;
  font-size: 13px;
  color: #fff;
}

.options h2 {
  color: #d8e4f8;
}

.dlgbody {
  flex: 1;
  background: #ece9d8;
  padding: 4px 11px 20px;
}

.options .dlgbody {
  padding: 4px 7px;
}

.dlgtabs {
  display: flex;
  gap: 2px;
  align-items: flex-end;
  padding-top: 2px;
}

.dlgtabs button {
  width: 46px;
  height: 24px;
  padding: 0 5px;
  text-align: left;
  border: 1px solid #919b9c;
  border-radius: 3px 3px 0 0;
  background: #fbfbf8;
}

.dlgtabs .on {
  width: 52px;
  height: 26px;
  margin: 0 -2px;
  padding-left: 8px;
  border-top: 3px solid #f0a830;
}

fieldset {
  min-width: 0;
  margin: 0 0 5px;
  padding: 7px 18px 1px 14px;
  border: 1px solid #d0d0bf;
  border-radius: 4px;
}

legend {
  margin-left: -7px;
  padding: 0 2px;
  color: #1e4cb0;
}

.dlgbody fieldset:first-child {
  margin-top: 2px;
}

.listbox {
  display: grid;
  grid-template-columns: 1fr 17px;
  grid-template-rows: 229px 17px;
  border: 1px solid #7f9db9;
  background: #ece9d8;
}

.tree {
  overflow: hidden;
  background: #fff;
  white-space: nowrap;
}

.opt, .group {
  display: flex;
  align-items: center;
  height: 16px;
}

.opt {
  gap: 6px;
  padding-left: 43px;
}

.group {
  gap: 4px;
  padding-left: 25px;
}

.group.top {
  padding-left: 6px;
}

.group svg {
  width: 14px;
  height: 16px;
}

.note {
  margin-top: 1px;
}

.reset {
  padding: 4px 18px 17px 8px;
}

.reset legend {
  margin-left: -1px;
}

.resetrow {
  display: flex;
  align-items: center;
}

.resetrow label {
  width: 64px;
}

.combo {
  width: 198px;
  height: 20px;
  display: grid;
  align-items: center;
}

.combo select, .combobtn {
  grid-area: 1 / 1;
}

.combo select {
  appearance: none;
  width: 100%;
  height: 20px;
  padding: 0 3px;
  border: 1px solid #7f9db9;
  border-radius: 0;
  background: #fff;
}

.combobtn {
  justify-self: end;
  width: 15px;
  height: 16px;
  margin-right: 2px;
  display: flex;
  align-items: center;
  justify-content: center;
  background: #c4d4fc;
  border-radius: 2px;
  pointer-events: none;
}

.xpbtn {
  width: 78px;
  height: 20px;
  border: 1px solid #003c74;
  border-radius: 3px;
  background: linear-gradient(#fff, #ecebe5 85%, #d8d0c4);
}

.xpbtn.default {
  box-shadow: inset 0 0 0 2px #a8c0f0;
}

.resetrow .xpbtn {
  margin-left: auto;
}

.dlgbtns {
  display: flex;
  justify-content: flex-end;
  gap: 11px;
  margin-top: 10px;
  padding-right: 3px;
}
```
